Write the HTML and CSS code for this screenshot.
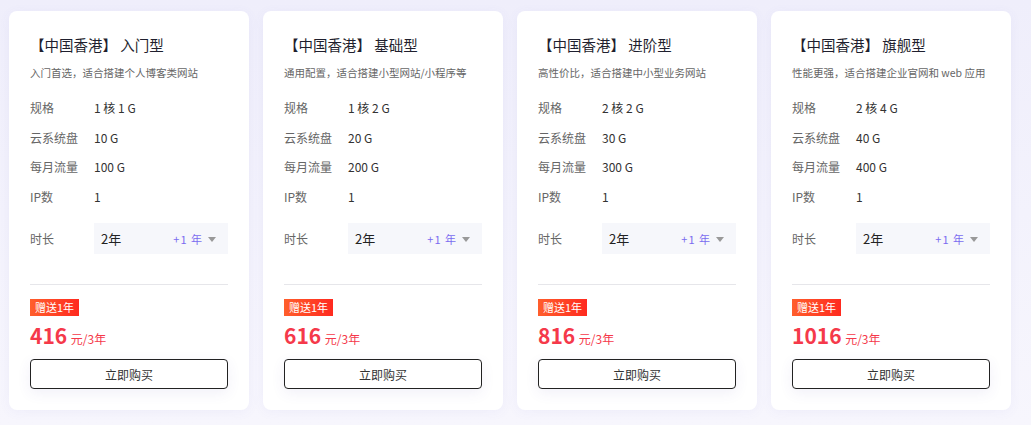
FILE: index.html
```html
<!DOCTYPE html>
<html lang="zh-CN">
<head>
    <meta charset="UTF-8">
    <meta name="viewport" content="width=device-width, initial-scale=1.0">
    <title>香港云服务器</title>
    <link rel="stylesheet" href="styles.css">
</head>
<body>
    <div class="plans">
        <div class="card">
            <h3 class="title">【中国香港】 入门型</h3>
            <p class="desc">入门首选，适合搭建个人博客类网站</p>
            <div class="row"><span class="label">规格</span><span class="value">1 核 1 G</span></div>
            <div class="row"><span class="label">云系统盘</span><span class="value">10 G</span></div>
            <div class="row"><span class="label">每月流量</span><span class="value">100 G</span></div>
            <div class="row"><span class="label">IP数</span><span class="value">1</span></div>
            <div class="row row-time">
                <span class="label">时长</span>
                <div class="select">
                    <span class="select-value">2年</span>
                    <span class="bonus">+1 年</span>
                    <span class="arrow"></span>
                </div>
            </div>
            <div class="divider"></div>
            <span class="badge">赠送1年</span>
            <div class="price"><span class="amount">416</span> <span class="unit">元/3年</span></div>
            <button class="buy">立即购买</button>
        </div>

        <div class="card">
            <h3 class="title">【中国香港】 基础型</h3>
            <p class="desc">通用配置，适合搭建小型网站/小程序等</p>
            <div class="row"><span class="label">规格</span><span class="value">1 核 2 G</span></div>
            <div class="row"><span class="label">云系统盘</span><span class="value">20 G</span></div>
            <div class="row"><span class="label">每月流量</span><span class="value">200 G</span></div>
            <div class="row"><span class="label">IP数</span><span class="value">1</span></div>
            <div class="row row-time">
                <span class="label">时长</span>
                <div class="select">
                    <span class="select-value">2年</span>
                    <span class="bonus">+1 年</span>
                    <span class="arrow"></span>
                </div>
            </div>
            <div class="divider"></div>
            <span class="badge">赠送1年</span>
            <div class="price"><span class="amount">616</span> <span class="unit">元/3年</span></div>
            <button class="buy">立即购买</button>
        </div>

        <div class="card">
            <h3 class="title">【中国香港】 进阶型</h3>
            <p class="desc">高性价比，适合搭建中小型业务网站</p>
            <div class="row"><span class="label">规格</span><span class="value">2 核 2 G</span></div>
            <div class="row"><span class="label">云系统盘</span><span class="value">30 G</span></div>
            <div class="row"><span class="label">每月流量</span><span class="value">300 G</span></div>
            <div class="row"><span class="label">IP数</span><span class="value">1</span></div>
            <div class="row row-time">
                <span class="label">时长</span>
                <div class="select">
                    <span class="select-value">2年</span>
                    <span class="bonus">+1 年</span>
                    <span class="arrow"></span>
                </div>
            </div>
            <div class="divider"></div>
            <span class="badge">赠送1年</span>
            <div class="price"><span class="amount">816</span> <span class="unit">元/3年</span></div>
            <button class="buy">立即购买</button>
        </div>

        <div class="card">
            <h3 class="title">【中国香港】 旗舰型</h3>
            <p class="desc">性能更强，适合搭建企业官网和 web 应用</p>
            <div class="row"><span class="label">规格</span><span class="value">2 核 4 G</span></div>
            <div class="row"><span class="label">云系统盘</span><span class="value">40 G</span></div>
            <div class="row"><span class="label">每月流量</span><span class="value">400 G</span></div>
            <div class="row"><span class="label">IP数</span><span class="value">1</span></div>
            <div class="row row-time">
                <span class="label">时长</span>
                <div class="select">
                    <span class="select-value">2年</span>
                    <span class="bonus">+1 年</span>
                    <span class="arrow"></span>
                </div>
            </div>
            <div class="divider"></div>
            <span class="badge">赠送1年</span>
            <div class="price"><span class="amount">1016</span> <span class="unit">元/3年</span></div>
            <button class="buy">立即购买</button>
        </div>
    </div>
</body>
</html>
```

FILE: styles.css
```css
body {
    font-family: "Noto Sans CJK SC", "Noto Sans", sans-serif;
    margin: 0;
    padding: 0;
    background: linear-gradient(180deg, #efeefb 0%, #f7f6fd 100%);
    min-height: 100vh;
    color: #222;
}
.plans {
    display: flex;
    gap: 14px;
    padding: 11px 20px 15px 9px;
}
.card {
    width: 240px;
    height: 399px;
    box-sizing: border-box;
    padding: 23px 21px 21px;
    background-color: #fff;
    border-radius: 8px;
    box-shadow: 0 2px 12px rgba(110, 100, 200, 0.06);
    display: flex;
    flex-direction: column;
    align-items: flex-start;
}
.title {
    margin: 0;
    font-size: 14.5px;
    font-weight: normal;
    line-height: 22px;
    color: #1f1f2e;
}
.desc {
    margin: 8px 0 11px;
    font-size: 10.5px;
    line-height: 18px;
    color: #666;
}
.row {
    display: flex;
    align-items: center;
    height: 30px;
    width: 100%;
    font-size: 12px;
}
.label {
    width: 64px;
    flex-shrink: 0;
    color: #666;
}
.value {
    color: #333;
}
.row-time {
    height: 31px;
    margin-top: 12px;
}
.select {
    flex: 1;
    height: 31px;
    display: flex;
    align-items: center;
    padding: 0 12px 0 7px;
    background-color: #f6f7fb;
    box-sizing: border-box;
}
.select-value {
    flex: 1;
    font-size: 13px;
    color: #222;
}
.bonus {
    font-size: 11px;
    letter-spacing: 1px;
    color: #7b6cf0;
    margin-right: 5px;
}
.arrow {
    width: 0;
    height: 0;
    border-left: 4px solid transparent;
    border-right: 4px solid transparent;
    border-top: 5px solid #999;
    margin-top: 1px;
}
.divider {
    width: 100%;
    height: 1px;
    background-color: #e6e6ea;
    margin-top: 30px;
}
.badge {
    margin-top: 14px;
    height: 17px;
    line-height: 17px;
    padding: 0 5px;
    font-size: 11px;
    color: #fff;
    background: linear-gradient(90deg, #ff5e2c 0%, #ff2a1f 100%);
}
.price {
    margin-top: 6px;
    line-height: 26px;
    color: #f5394a;
}
.amount {
    font-size: 21px;
    font-weight: bold;
}
.unit {
    font-size: 12px;
}
.buy {
    margin-top: 7px;
    width: 100%;
    height: 30px;
    font-family: inherit;
    font-size: 12px;
    color: #333;
    background-color: #fff;
    border: 1px solid #222;
    border-radius: 4px;
    box-shadow: 0 4px 14px rgba(80, 70, 160, 0.08);
    cursor: pointer;
}
```
